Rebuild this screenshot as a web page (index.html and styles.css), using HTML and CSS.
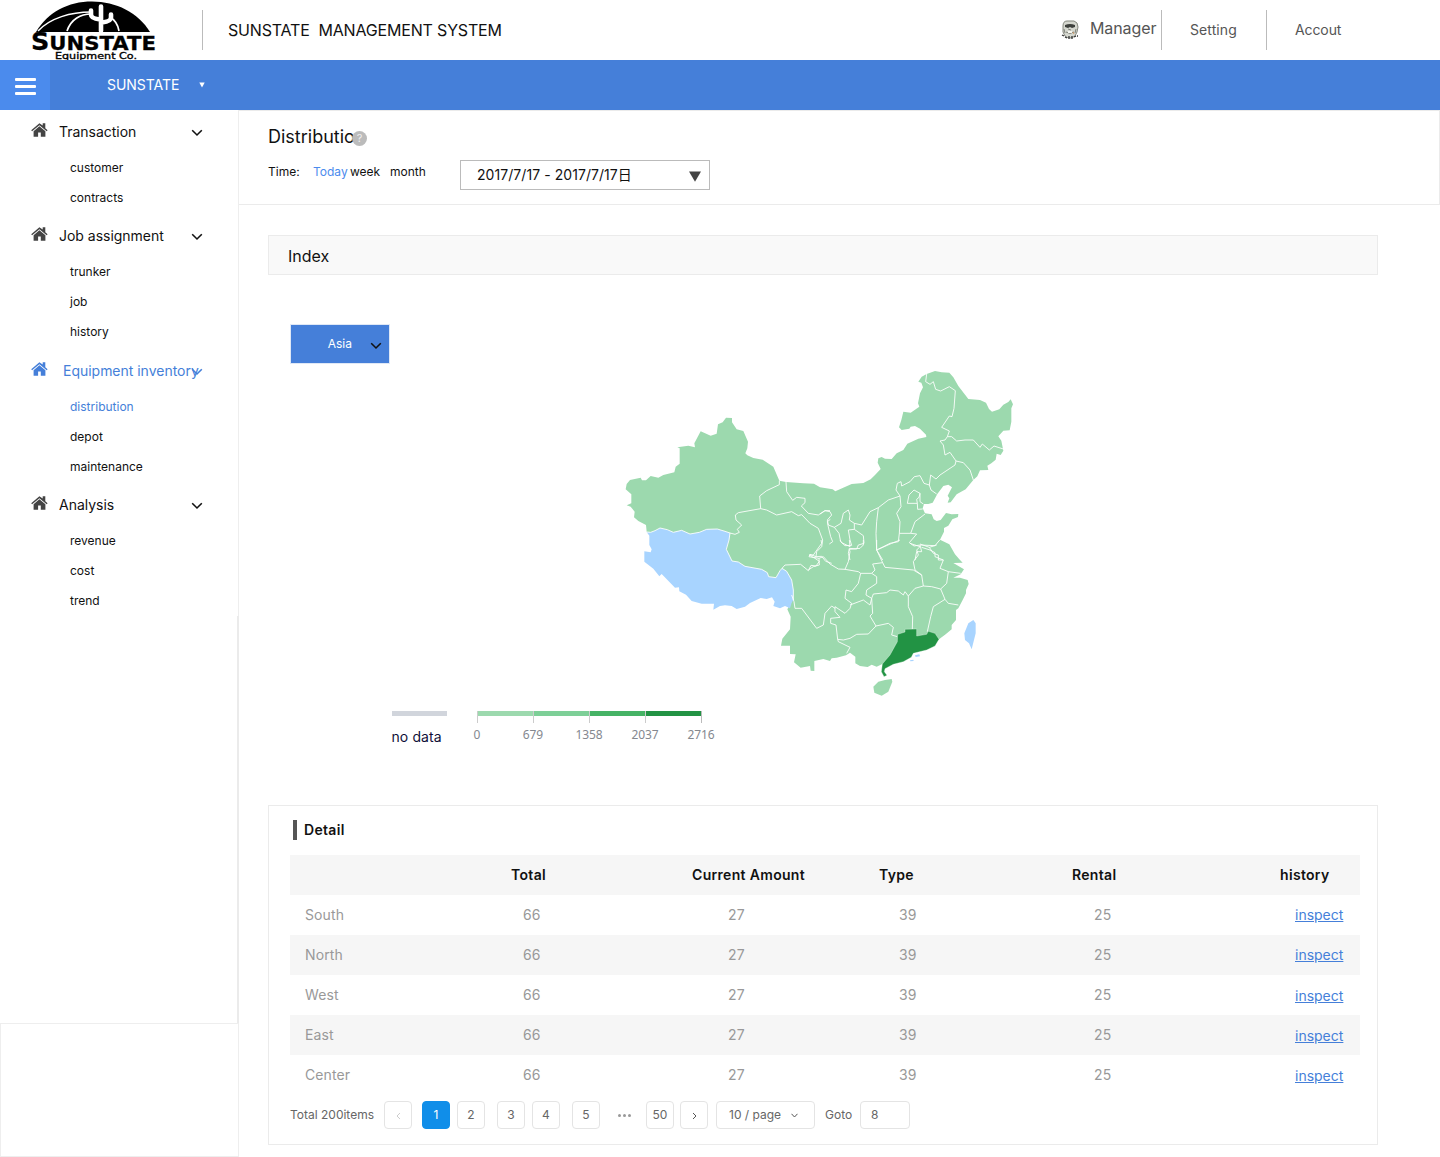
FILE: index.html
```html
<!DOCTYPE html>
<html lang="en">
<head>
<meta charset="utf-8">
<title>Sunstate Management System</title>
<link rel="stylesheet" href="styles.css">
</head>
<body>
<svg class="defs" width="0" height="0">
  <symbol id="home" viewBox="0 0 17 14"><path d="M8.4 0.3 0.2 7.3l.9 1 7.3-6.100 7.300 6.100.9-1-2.300-2V.2h-2.600v2.300z"/><path d="M8.400 3.300 2.600 8.200v5.500h4.500V9.600h2.700v4.100h4.600V8.200z"/></symbol>
  <symbol id="chev" viewBox="0 0 12 8"><path d="M1.200 1.300 6 6l4.800-4.700" fill="none" stroke="currentColor" stroke-width="1.600"/></symbol>
</svg>
<header class="top">
  <svg class="logo" width="130" height="60" viewBox="0 0 130 60">
    <path d="M5 32C17 12 37 1.500 61 1.500s46 11 58 30.500z"/>
    <path d="M7 31C19 18 40 12 60 12" fill="none" stroke="#fff" stroke-width="1.500"/>
    <path d="M36 31c4-12 14-17 24-17M79 17c5 3 8 8 9 14" fill="none" stroke="#fff" stroke-width="1.700"/>
    <path d="M70 31V6.500M60 10.500v4q0 4 9 5M80 14.500v3q0 4-9 5" fill="none" stroke="#fff" stroke-width="4.600" stroke-linecap="round"/>
    <text class="logo-name" x="0" y="50" textLength="125" lengthAdjust="spacingAndGlyphs"><tspan font-size="24">S</tspan>UNSTATE</text>
    <text class="logo-sub" x="24" y="58.500" textLength="82" lengthAdjust="spacingAndGlyphs">Equipment Co.</text>
  </svg>
  <h1 class="system">SUNSTATE&nbsp; MANAGEMENT SYSTEM</h1>
  <div class="user">
    <svg width="18" height="20" viewBox="0 0 18 20">
      <path d="M2 6Q2 1 6 1h7q4 1 4 6l-1 5-2 4q-5 4-10 0L2 12z" fill="#d5d7cf" stroke="#85887f"/>
      <path d="M4 5q5-2 10 0v2l-3 1-2-1-2 1-3-1z" fill="#3e413d"/>
      <path d="M7 9l3 1M5 12q4 3 8 0M3 9l1 4M15 9l-1 4" fill="none" stroke="#7f8279"/>
      <path d="M7 11h4v2H7z" fill="#f6f6f0"/><path d="M12 12l1 2" stroke="#cf9968"/>
      <path d="M1 15l2 1M4 17l2 1M8 16v3M11 16v3M13 17l2-1M16 16h1" stroke="#333" stroke-width="1.300"/>
    </svg>
    <span>Manager</span>
  </div>
  <nav class="top-link">Setting</nav>
  <nav class="top-link">Accout</nav>
</header>
<div class="bar">
  <div class="burger"><i></i><i></i><i></i></div>
  <span class="brand">SUNSTATE</span>
  <svg width="6" height="6" viewBox="0 0 6 6"><path d="M.3.500h5.400L3 5.500z" fill="#fff"/></svg>
</div>
<div class="body">
  <aside class="side">
    <div class="menu">
      <section class="group">
        <h2><svg class="home"><use href="#home"/></svg><span>Transaction</span><svg class="chev"><use href="#chev"/></svg></h2>
        <a>customer</a><a>contracts</a>
      </section>
      <section class="group">
        <h2><svg class="home"><use href="#home"/></svg><span>Job assignment</span><svg class="chev"><use href="#chev"/></svg></h2>
        <a>trunker</a><a>job</a><a>history</a>
      </section>
      <section class="group open">
        <h2><svg class="home"><use href="#home"/></svg><span>Equipment inventory</span><svg class="chev"><use href="#chev"/></svg></h2>
        <a class="on">distribution</a><a>depot</a><a>maintenance</a>
      </section>
      <section class="group">
        <h2><svg class="home"><use href="#home"/></svg><span>Analysis</span><svg class="chev"><use href="#chev"/></svg></h2>
        <a>revenue</a><a>cost</a><a>trend</a>
      </section>
    </div>
    <div class="side-gap"></div>
    <div class="side-foot"></div>
  </aside>
  <main class="main">
    <section class="filter">
      <div class="title"><h2>Distribution</h2><span class="help">?</span></div>
      <div class="time">
        <span class="t-label">Time:</span><span class="t-today">Today</span><span class="t-week">week</span><span class="t-month">month</span>
        <div class="date"><span>2017/7/17 - 2017/7/17日</span><svg width="12" height="11" viewBox="0 0 12 11"><path d="M0 .500h12L6 10.700z" fill="#444"/></svg></div>
      </div>
    </section>
    <div class="content">
      <h3 class="index">Index</h3>
      <section class="chart">
        <div class="region"><span>Asia</span><svg class="chev"><use href="#chev"/></svg></div>
        <svg class="map" width="420" height="340" viewBox="0 0 1260 1020">
          <path class="land" d="M110 515 108 495 85 483 72 472 74 455 62 440 50 436 64 430 64 403 47 388 50 372 60 360 92 353 96 361 108 361 122 348 145 353 160 345 193 337 197 320 209 311 209 265 202 262 235 257 255 262 253 250 272 214 302 227 320 221 324 193 338 187 348 173 366 174 366 187 380 208 400 213 414 245 412 265 406 280 412 286 430 294 458 299 490 320 508 362 528 366 580 370 612 371 630 382 668 388 676 394 725 372 760 369 782 358 795 345 812 327 803 308 805 295 815 291 825 296 845 297 860 280 880 270 892 251 925 236 949 231 948 224 930 206 915 198 902 200 898 206 875 210 867 202 874 180 880 155 902 158 928 140 924 130 930 100 939 82 934 68 925 65 935 50 950 42 975 33 995 37 1018 38 1030 52 1045 78 1075 117 1110 120 1128 128 1137 147 1146 155 1168 148 1180 134 1195 126 1202 118 1209 133 1204 145 1204 185 1199 211 1180 212 1165 229 1174 242 1180 272 1172 285 1160 281 1157 299 1144 310 1132 317 1135 330 1110 331 1102 349 1090 360 1067 388 1040 403 1022 427 1013 428 1018 415 1013 407 1026 382 1015 374 1000 378 982 402 968 428 955 432 942 432 938 445 945 460 965 463 971 478 980 483 992 480 1008 459 1025 463 1045 462 1044 471 1027 478 1015 497 1002 504 1002 515 990 539 1018 553 1035 583 1048 598 1058 608 1030 609 1062 628 1052 643 1030 653 1050 653 1073 660 1076 672 1068 690 1068 700 1058 720 1045 745 1038 750 1038 780 1025 795 1025 808 1007 823 987 838 940 860 817 912 800 920 785 914 773 921 750 918 736 910 736 890 720 878 708 886 680 893 665 895 660 903 640 897 613 903 613 933 602 932 600 918 572 923 552 907 557 883 540 882 540 857 513 857 517 836 540 808 542 770 532 748 545 725 300 650 130 530z"/>
          <path class="none" d="M110 516 122 517 135 512 150 504 172 509 190 517 215 511 240 522 268 517 290 508 322 507 345 514 360 519 357 540 349 568 366 603 385 606 405 619 455 628 472 638 476 650 498 653 510 632 516 625 530 634 545 660 550 690 550 720 545 728 540 745 525 738 510 745 490 738 494 725 486 712 470 717 452 714 420 729 405 740 380 747 365 738 345 736 330 738 310 749 312 731 275 731 245 723 228 704 208 694 207 682 195 683 155 642 148 649 130 626 103 605 103 574 122 577 125 568 118 555 118 527z"/>
          <path class="edge" d="M110 516 122 517 135 512 150 504 172 509 190 517 215 511 240 522 268 517 290 508 322 507 345 514 360 519 357 540 349 568 366 603 385 606 405 619 455 628 472 638 476 650 498 653 510 632 516 625 530 634 545 660 550 690 550 720M508 362 508 374 470 392 449 408 452 446 385 458 376 465 378 480 395 495 382 508 388 517 375 523 360 519M452 446 470 450 500 465 545 455 565 467 575 464 600 490 625 505 638 540 635 560 620 575 618 590 600 583 597 590 612 593 628 604 618 618 603 616 595 632 572 613 525 615 516 625M528 366 530 395 548 421 560 412 585 415 585 428 574 438 595 460 625 465 645 452 660 452"/>
          <g transform="translate(630 0)"><path class="edge" d="M0 462 15 452 30 455 35 465 22 480 25 495 43 502 63 490 70 460 85 450 90 465 88 480 103 490 125 495 150 455 175 443 205 420 240 408M31 478 22 485 24 497 32 530 38 545 28 552M-12 590 5 589 17 604 35 610M43 502 57 520 62 545 75 557 95 556 90 540 85 510 103 508 103 490M103 508 130 527 132 550 115 555 110 567 88 565 85 580 90 600M175 443 170 485 168 520 170 570 210 550 235 545 238 520 240 485 230 460 243 440 240 408 228 390 232 370 243 365 245 378 270 365 283 350 300 347 312 370 328 375 333 390 350 402M328 375 332 345 348 357 360 345 405 315 408 303M262 430 267 405 282 390 300 400 297 412 290 418 292 430zM300 400 300 425 310 432M292 430 293 448 308 447M315 462 285 485 272 520 238 520M272 520 290 522 268 548 282 558 300 555 345 557 360 539M300 555 305 575 290 575 285 600M305 562 330 570 345 578 345 590 370 600M170 570 188 600M320 42 317 65 330 73 340 65 347 88 362 93 388 80 406 92 402 145 396 170 388 168 365 202 388 213 382 230 375 240 360 243 370 255 375 285 390 277 408 303 430 308 450 330 460 360M382 230 395 230 410 243 435 240 460 240 480 262 487 252 508 270 522 258 550 267"/></g>
          <g transform="translate(480 540)">
            <path class="edge" d="M115 90 130 80 148 75 147 55 160 50 180 72 205 87 225 88M147 55 130 52 118 45 130 45 155 10 153 0M210 0 215 8 240 20 238 0M225 88 235 65 240 35 238 28 270 25 280 15 280 0M225 88 265 95 272 100 265 130 245 155 228 150 225 175 245 190 240 205 225 220 195 200 195 215 210 232 182 235 182 250 198 255 203 298 220 300 240 295 260 283 295 282 318 258 355 250 370 262 365 285 382 290M272 100 305 100 320 110 320 130 290 150 288 165 305 175 300 195 280 180 240 195M305 100 315 90 308 72 338 68 320 30 320 0M338 68 345 82 430 90 455 105 460 138 435 145 415 168 405 155 400 165 385 153 360 150 350 158 310 162 305 175 308 220 300 228 318 258M325 28 365 10 390 0M420 10 450 20 440 30 445 45 430 65 435 90 455 105M450 12 478 22 500 15M478 22 490 40 505 45 505 60 520 60 510 85 535 95 572 100M535 95 530 130 512 147 485 140 460 138M512 147 525 178 535 190 565 195M525 178 490 200 482 230 472 275M415 168 415 200 428 230 427 267M65 165 72 185 75 205 95 205 140 265 160 255 165 220 185 198 195 205M203 298 205 305 240 322 230 340"/>
            <path class="high" d="M405 268 440 267 440 288 470 283 475 274 495 280 507 298 495 318 470 330 430 340 424 352 400 365 370 373 345 386 343 395 351 406 342 410 334 395 337 372 360 345 382 305 383 283 405 276z"/>
            <path class="land" d="M365 417 367 425 355 455 335 467 313 458 310 440 325 425 345 420z"/>
            <path class="none" d="M610 240 617 250 617 280 605 328 597 310 585 300 583 280 595 250zM435 346 448 343 450 349 437 351zM420 361 430 359 431 363 421 364z"/>
          </g>
        </svg>
        <div class="legend">
          <div class="nodata"><i></i><span>no data</span></div>
          <div class="scale">
            <div class="segs"><i class="s1"></i><i class="s2"></i><i class="s3"></i><i class="s4"></i></div>
            <div class="nums"><span>0</span><span>679</span><span>1358</span><span>2037</span><span>2716</span></div>
          </div>
        </div>
      </section>
      <section class="detail">
        <h3>Detail</h3>
        <div class="table">
          <div class="row head"><span></span><span>Total</span><span>Current Amount</span><span>Type</span><span>Rental</span><span>history</span></div>
          <div class="row"><span>South</span><span>66</span><span>27</span><span>39</span><span>25</span><a>inspect</a></div>
          <div class="row"><span>North</span><span>66</span><span>27</span><span>39</span><span>25</span><a>inspect</a></div>
          <div class="row low"><span>West</span><span>66</span><span>27</span><span>39</span><span>25</span><a>inspect</a></div>
          <div class="row low"><span>East</span><span>66</span><span>27</span><span>39</span><span>25</span><a>inspect</a></div>
          <div class="row low"><span>Center</span><span>66</span><span>27</span><span>39</span><span>25</span><a>inspect</a></div>
        </div>
        <div class="pager">
          <span class="total">Total 200items</span>
          <b class="g10 off"><svg width="5" height="8" viewBox="0 0 5 8"><path d="M4 1 1 4l3 3"/></svg></b>
          <b class="g7 cur">1</b><b class="g12">2</b><b class="g7">3</b><b class="g12">4</b><b>5</b>
          <span class="dots"><i></i><i></i><i></i></span>
          <b class="g6">50</b>
          <b class="g8 next"><svg width="5" height="8" viewBox="0 0 5 8"><path d="M1 1l3 3-3 3"/></svg></b>
          <div class="size"><span>10 / page</span><svg width="7" height="5" viewBox="0 0 7 5"><path d="M.500.800 3.500 4l3-3.200"/></svg></div>
          <span class="goto">Goto</span>
          <div class="input">8</div>
        </div>
      </section>
    </div>
  </main>
</div>
</body>
</html>
```
FILE: styles.css
```css
* { box-sizing: border-box; }
body { margin: 0; width: 1440px; height: 1157px; overflow: hidden; background: #fff; color: #111; font: 14px/20px Inter, "Noto Sans CJK SC", sans-serif; letter-spacing: .1px; }
h1, h2, h3 { margin: 0; font-weight: 400; }
.defs { display: none; }

.top { display: flex; align-items: center; height: 60px; color: #555; }
.logo { margin-left: 31px; fill: #000; flex: none; }
.logo-name { font: bold 20px "DejaVu Sans", sans-serif; letter-spacing: 0; stroke: #000; stroke-width: .3; }
.logo-sub { font: 8px "DejaVu Sans", sans-serif; letter-spacing: 0; stroke: #000; stroke-width: .3; }
.system { width: 860px; height: 40px; margin-left: 41px; padding-left: 25px; border-left: 1px solid #bbb; font-size: 16px; line-height: 40px; color: #111; letter-spacing: -.17px; }
.user { display: flex; gap: 11px; width: 100px; height: 40px; padding-top: 8px; margin-left: -1px; font-size: 16px; white-space: nowrap; letter-spacing: -.1px; }
.user svg { flex: none; margin-top: 2px; }
.top-link { width: 105px; height: 40px; padding-left: 28px; border-left: 1px solid #bbb; line-height: 40px; }
.top-link:last-child { letter-spacing: -.1px; }

.bar { display: flex; align-items: center; height: 50px; background: #457fd9; color: #fff; }
.burger { display: flex; flex-direction: column; justify-content: center; gap: 4px; width: 50px; height: 50px; padding: 3px 14px 0 15px; background: #4b8bed; }
.burger i { height: 3px; border-radius: 1px; background: #fff; }
.brand { width: 92px; margin-left: 57px; letter-spacing: -.05px; }

.body { display: flex; height: 1047px; }
.side { display: flex; flex-direction: column; width: 239px; flex: none; }
.menu { display: flex; flex-direction: column; height: 506px; padding-top: 1px; gap: 2px; border-right: 1px solid #eee; }
.group { display: flex; flex-direction: column; color: #111; }
.group h2 { display: flex; align-items: center; height: 42px; padding-left: 31px; font-size: 14px; white-space: nowrap; letter-spacing: -.02px; }
.group span { width: 132px; margin-left: 11px; }
.home { width: 17px; height: 14px; margin-bottom: 5px; fill: #444; }
.chev { width: 12px; height: 8px; margin-top: 2px; flex: none; }
.group a { height: 30px; padding-left: 70px; font-size: 12px; line-height: 30px; letter-spacing: 0; }
.open { padding-top: 1px; }
.open h2, .group .on { color: #457fd9; }
.open .home { fill: #457fd9; }
.open h2 span { width: 128px; margin-left: 15px; }
.side-gap { height: 407px; border-right: 2px solid #ebebeb; }
.side-foot { flex: 1; border: 1px solid #eee; }

.main { flex: 1; }
.filter { height: 95px; padding: 15px 0 0 29px; border: 1px solid #ebebeb; border-left: 0; }
.title { display: flex; align-items: center; height: 22px; }
.title h2 { width: 84px; font-size: 18px; white-space: nowrap; letter-spacing: 0; }
.help { width: 15px; height: 15px; margin-top: 3px; border-radius: 50%; background: #bbb; color: #eee; font-size: 11px; line-height: 15px; text-align: center; z-index: 1; letter-spacing: 0; }
.time { display: flex; align-items: center; height: 30px; margin-top: 12px; font-size: 12px; letter-spacing: 0; }
.time > span { margin-bottom: 6px; }
.t-label { width: 45px; }
.t-today { width: 37px; color: #4b8bed; }
.t-week { width: 40px; }
.t-month { width: 70px; }
.date { display: flex; align-items: center; justify-content: space-between; width: 250px; height: 30px; padding: 0 8px 0 16px; border: 1px solid #bbb; font-size: 14px; letter-spacing: .06px; }
.date svg { margin-top: 2px; }

.content { width: 1139px; padding: 30px 0 0 29px; }
.index { height: 40px; padding: 1px 19px; border: 1px solid #ebebeb; background: #f9f9f9; font-size: 16px; line-height: 39px; letter-spacing: 0; }
.chart { display: grid; grid-template-columns: 334px 1fr; grid-template-rows: 346px 57px; height: 530px; padding: 49px 0 0 22px; }
.region { display: flex; align-items: center; justify-content: flex-end; gap: 18px; width: 100px; height: 40px; padding-right: 7px; border: 1px solid #dfe8f6; background: #457fd9; color: #fff; font-size: 12px; letter-spacing: 0; }
.region .chev { margin-top: 4px; color: #111; }
.map { margin: 36px 0 0 -14px; }
.map + .legend { grid-column: 1 / 3; }
.land { fill: #9cd9ae; }
.none { fill: #a8d4ff; }
.high { fill: #229344; stroke: #fff; stroke-width: 1; }
.edge { fill: none; stroke: #fff; stroke-width: 2.6; stroke-linejoin: round; }
.legend { display: flex; align-items: flex-start; margin: 40.5px 0 0 101.5px; z-index: 1; }
.nodata { width: 79.5px; color: #101038; white-space: nowrap; }
.nodata i { display: block; width: 55px; height: 5px; margin-bottom: 11.5px; background: #d1d5dc; }
.segs { display: grid; grid-template-columns: repeat(4, 56px); width: 225px; margin-left: 6px; height: 12px; border-right: 1px solid #bbb; }
.segs i { height: 12px; border-left: 1px solid #ccc; background: linear-gradient(var(--c) 5px, transparent 5px); }
.s1 { --c: #9cd9ae; } .s2 { --c: #7dcf97; } .s3 { --c: #46b365; } .s4 { --c: #229344; }
.nums { display: grid; grid-template-columns: repeat(5, 56px); width: 280px; margin: 2.5px 0 0 -22px; color: #84888f; font: 12px/20px "Noto Sans", sans-serif; text-align: center; letter-spacing: -.1px; }

.detail { height: 340px; padding: 14px 17px 0 21px; border: 1px solid #ebebeb; }
.detail h3 { height: 20px; margin-left: 3px; padding-left: 7px; border-left: 4px solid #555; font-size: 14px; font-weight: 600; line-height: 20px; letter-spacing: .32px; }
.table { margin-top: 15px; }
.row { display: grid; grid-template-columns: 218px 205px 171px 195px 201px 1fr; height: 40px; padding-left: 15px; line-height: 40px; color: #999; white-space: nowrap; }
.row:nth-child(odd) { background: #f6f6f6; }
.row.head { grid-template-columns: 206px 181px 187px 193px 208px 1fr; color: #111; font-weight: 600; letter-spacing: .32px; }
.row a { color: #457fd9; text-decoration: underline; letter-spacing: 0; }
.low a { padding-top: 1px; }
.pager { display: flex; align-items: center; height: 28px; margin-top: 6px; color: #666; font-size: 12px; letter-spacing: 0; white-space: nowrap; }
.pager svg { fill: none; stroke: #555; }
.pager b { display: flex; align-items: center; justify-content: center; width: 28px; height: 28px; border: 1px solid #e4e4e4; border-radius: 4px; font-weight: 400; flex: none; }
.total { width: 94px; }
.pager .g10 { margin-right: 10px; } .pager .g7 { margin-right: 7px; } .pager .g12 { margin-right: 12px; }
.pager .g6 { margin-right: 6px; } .pager .g8 { margin-right: 8px; }
.pager .off, .pager .next { padding-top: 2px; }
.pager .off svg { stroke: #ccc; }
.pager .cur { background: #108ee9; border-color: #108ee9; color: #fff; }
.dots { display: flex; gap: 2px; width: 46px; padding-left: 18px; }
.dots i { width: 3px; height: 3px; border-radius: 50%; background: #999; }
.size { display: flex; align-items: center; gap: 10px; width: 99px; height: 28px; padding-left: 12px; border: 1px solid #e4e4e4; border-radius: 4px; }
.goto { width: 35px; margin-left: 10px; }
.input { width: 50px; height: 28px; padding-left: 10px; border: 1px solid #e4e4e4; border-radius: 4px; line-height: 26px; }
```
